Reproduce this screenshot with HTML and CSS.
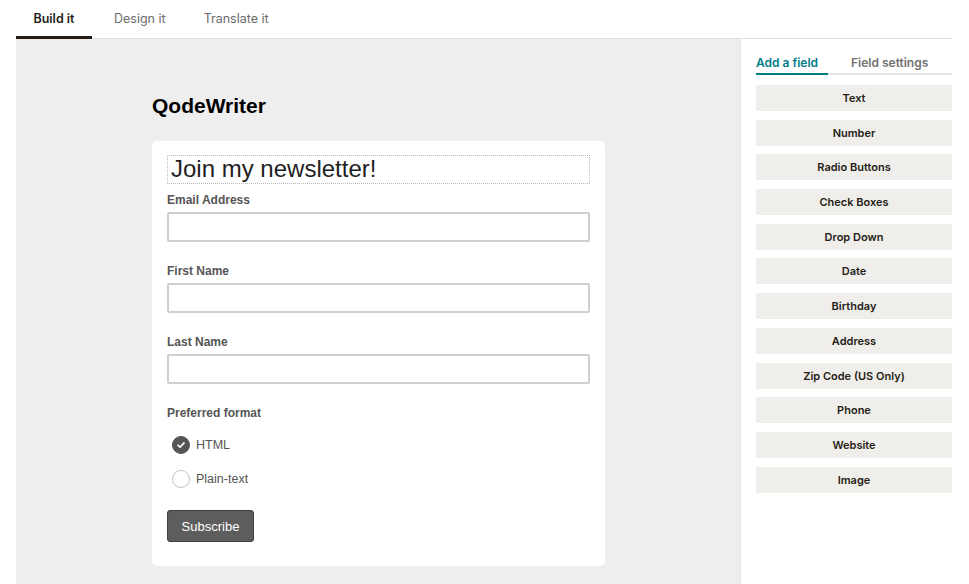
FILE: index.html
```html
<!DOCTYPE html>
<html>
    <head>
        <title>Form Builder</title>
        <meta name="viewport" content="width=device-width, initial-scale=1.0">
        <link rel="stylesheet" href="styles.css">
    </head>
    <body>
        <div id="topTabs">
            <span class="tab active">Build it</span>
            <span class="tab">Design it</span>
            <span class="tab">Translate it</span>
        </div>

        <div id="workspace">
            <div id="canvas">
                <div id="formWrap">
                    <h1 class="brand">QodeWriter</h1>

                    <div class="card">
                        <div class="formTitle">Join my newsletter!</div>

                        <label class="fieldLabel">Email Address</label>
                        <input class="textInput" type="text">

                        <label class="fieldLabel">First Name</label>
                        <input class="textInput" type="text">

                        <label class="fieldLabel">Last Name</label>
                        <input class="textInput" type="text">

                        <label class="fieldLabel">Preferred format</label>
                        <div class="radioRow">
                            <span class="radio checked">
                                <svg width="10" height="10" viewBox="0 0 10 10"><path d="M2 5.2 L4.1 7.2 L8 2.9" fill="none" stroke="#fff" stroke-width="1.6" stroke-linecap="round" stroke-linejoin="round"/></svg>
                            </span>
                            <span class="radioText">HTML</span>
                        </div>
                        <div class="radioRow">
                            <span class="radio"></span>
                            <span class="radioText">Plain-text</span>
                        </div>

                        <button class="subscribe">Subscribe</button>
                    </div>
                </div>
            </div>

            <div id="sidebar">
                <div id="sideTabs">
                    <span class="sideTab active">Add a field</span>
                    <span class="sideTab">Field settings</span>
                </div>
                <div class="fieldList">
                    <div class="fieldBtn">Text</div>
                    <div class="fieldBtn">Number</div>
                    <div class="fieldBtn">Radio Buttons</div>
                    <div class="fieldBtn">Check Boxes</div>
                    <div class="fieldBtn">Drop Down</div>
                    <div class="fieldBtn">Date</div>
                    <div class="fieldBtn">Birthday</div>
                    <div class="fieldBtn">Address</div>
                    <div class="fieldBtn">Zip Code (US Only)</div>
                    <div class="fieldBtn">Phone</div>
                    <div class="fieldBtn">Website</div>
                    <div class="fieldBtn">Image</div>
                </div>
            </div>
        </div>
    </body>
</html>
```

FILE: styles.css
```css
*{
    margin: 0;
    padding: 0;
    box-sizing: border-box;
}

body{
    width: 969px;
    height: 584px;
    overflow: hidden;
    background-color: #ffffff;
    padding: 0 17px 0 16px;
    font-family: Inter, "Liberation Sans", sans-serif;
}

#topTabs{
    display: flex;
    height: 39px;
    border-bottom: 1px solid #e2e2e2;
}

.tab{
    font-size: 12.5px;
    color: #6b6b6b;
    padding: 11px 0 0 0;
    margin-right: 38px;
}

.tab:first-child{
    width: 76px;
    margin-right: 22px;
    text-align: center;
}

.tab.active{
    color: #241c15;
    font-weight: 600;
    border-bottom: 3px solid #241c15;
    margin-bottom: -1px;
}

#workspace{
    display: flex;
    height: 545px;
}

#canvas{
    width: 725px;
    background-color: #eeeeee;
    border-right: 1px solid #e4e4e4;
    padding: 54px 0 0 136px;
}

#formWrap{
    width: 453px;
}

.brand{
    font-family: "Liberation Sans", Arial, sans-serif;
    font-size: 21px;
    font-weight: bold;
    color: #000;
    line-height: 26px;
    height: 48px;
}

.card{
    display: flex;
    flex-direction: column;
    align-items: flex-start;
    background-color: #ffffff;
    border-radius: 5px;
    padding: 14px 15px 24px 15px;
    font-family: "Liberation Sans", Arial, sans-serif;
}

.formTitle{
    width: 100%;
    height: 29px;
    border: 1px dotted #b8b8b8;
    font-size: 24px;
    color: #222;
    padding-left: 3px;
    line-height: 25px;
}

.fieldLabel{
    font-size: 12px;
    font-weight: bold;
    color: #555;
    margin-top: 9px;
    margin-bottom: 5px;
}

.textInput{
    width: 100%;
    height: 30px;
    border: 2px solid #cfcfcf;
    border-radius: 2px;
    margin-bottom: 13px;
}

.radioRow{
    display: flex;
    align-items: center;
    margin-left: 5px;
    margin-top: 7px;
    height: 26px;
}

.radioRow + .radioRow{
    margin-top: 8px;
}

.radio{
    width: 18px;
    height: 18px;
    border-radius: 50%;
    border: 1px solid #c4c4c4;
    display: flex;
    align-items: center;
    justify-content: center;
    margin-right: 6px;
}

.radio.checked{
    background-color: #555555;
    border-color: #555555;
}

.radioText{
    font-size: 12.5px;
    color: #555;
}

.subscribe{
    margin-top: 18px;
    width: 87px;
    height: 32px;
    background-color: #5d5d5d;
    border: 1px solid #3f3f3f;
    border-radius: 3px;
    color: #ffffff;
    font-family: "Liberation Sans", Arial, sans-serif;
    font-size: 13px;
}

#sidebar{
    flex: 1;
    padding: 16px 0 0 15px;
}

#sideTabs{
    display: flex;
    border-bottom: 2px solid #e5e5e5;
    height: 20px;
    margin-bottom: 10px;
}

.sideTab{
    font-size: 12px;
    font-weight: 600;
    color: #727272;
    white-space: nowrap;
}

.sideTab.active{
    color: #007c89;
    width: 72px;
    margin-right: 23px;
    border-bottom: 2px solid #007c89;
    margin-bottom: -2px;
}

.fieldList{
    display: flex;
    flex-direction: column;
    gap: 8.7px;
}

.fieldBtn{
    height: 26px;
    background-color: #efeeea;
    font-size: 11px;
    font-weight: 600;
    color: #241c15;
    display: flex;
    align-items: center;
    justify-content: center;
}
```
